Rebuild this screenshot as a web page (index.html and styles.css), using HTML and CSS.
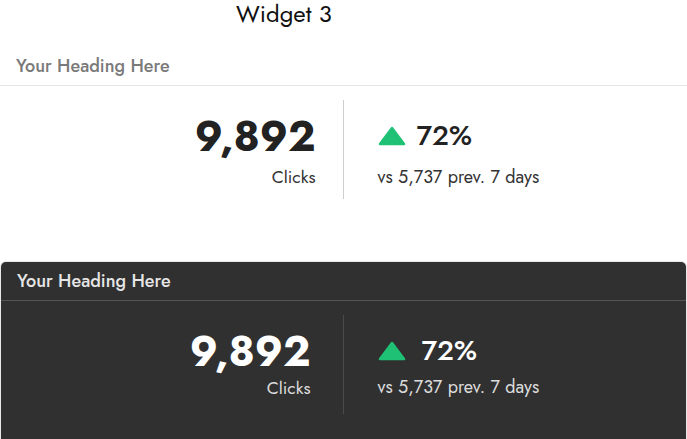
FILE: index.html
```html
<!DOCTYPE html>
<html>
<head>
<meta charset="utf-8">
<link rel="stylesheet" href="styles.css">
</head>
<body>
  <h1 class="page-title">Widget 3</h1>

  <section class="widget widget--light">
    <header class="widget__head">Your Heading Here</header>
    <div class="widget__body">
      <div class="stat">
        <div class="stat__value">9,892</div>
        <div class="stat__label">Clicks</div>
      </div>
      <div class="trend">
        <div class="trend__top">
          <svg class="trend__icon" width="28" height="20" viewBox="0 0 28 20"><polygon points="14,2 26,18 2,18" fill="#1fc174" stroke="#1fc174" stroke-width="2.5" stroke-linejoin="round"/></svg>
          <span class="trend__pct">72%</span>
        </div>
        <div class="trend__sub">vs 5,737 prev. 7 days</div>
      </div>
    </div>
  </section>

  <section class="widget widget--dark">
    <header class="widget__head">Your Heading Here</header>
    <div class="widget__body">
      <div class="stat">
        <div class="stat__value">9,892</div>
        <div class="stat__label">Clicks</div>
      </div>
      <div class="trend">
        <div class="trend__top">
          <svg class="trend__icon" width="28" height="20" viewBox="0 0 28 20"><polygon points="14,2 26,18 2,18" fill="#1fc174" stroke="#1fc174" stroke-width="2.5" stroke-linejoin="round"/></svg>
          <span class="trend__pct">72%</span>
        </div>
        <div class="trend__sub">vs 5,737 prev. 7 days</div>
      </div>
    </div>
  </section>
</body>
</html>
```

FILE: styles.css
```css
* { box-sizing: border-box; }

body {
  margin: 0;
  background: #ffffff;
  font-family: "Jost", "Lato", "Noto Sans", sans-serif;
  color: #222;
}

.page-title {
  margin: 0;
  padding: 0 0 0 236px;
  height: 47px;
  font-size: 24px;
  font-weight: 400;
  line-height: 27px;
  color: #111;
}

.widget__head {
  height: 39px;
  padding: 0 16px;
  display: flex;
  align-items: center;
  font-size: 18px;
  font-weight: 500;
  border-bottom: 1px solid #e6e6e6;
}

.widget__body {
  display: grid;
  grid-template-columns: 1fr 1fr;
  padding: 14px 0;
}

.stat {
  height: 99px;
  border-right: 1px solid #cfcfcf;
  padding: 14px 27px 0 0;
  text-align: right;
}

.stat__value {
  font-size: 42px;
  font-weight: 700;
  line-height: 46px;
  color: #222;
}

.stat__label {
  margin-top: 6px;
  font-size: 17.5px;
  line-height: 22px;
  color: #333;
}

.trend {
  padding: 21px 0 0 34px;
}

.trend__top {
  display: flex;
  align-items: center;
  gap: 11px;
  height: 30px;
}

.trend__icon { display: block; }

.trend__pct {
  font-size: 28px;
  font-weight: 500;
  line-height: 30px;
  color: #222;
}

.trend__sub {
  margin-top: 15px;
  font-size: 18px;
  line-height: 22px;
  color: #333;
}

.widget--light .widget__head { color: #7a7a7a; }

.widget--dark {
  margin: 49px 1px 0 1px;
  background: #303030;
  border-radius: 5px 5px 0 0;
  box-shadow: 0 0 2px rgba(0,0,0,0.35);
}

.widget--dark .widget__head {
  color: #e6e6e6;
  border-bottom-color: #555;
}

.widget--dark .widget__body { padding-bottom: 40px; }

.widget--dark .stat {
  border-right-color: #4a4a4a;
  padding-right: 32px;
}

.widget--dark .stat__label { margin-top: 2px; }
.widget--dark .trend__top { gap: 16px; }
.widget--dark .trend__sub { margin-top: 10px; }

.widget--dark .stat__value { color: #ffffff; }
.widget--dark .stat__label { color: #dcdcdc; }
.widget--dark .trend__pct { color: #ffffff; }
.widget--dark .trend__sub { color: #dcdcdc; }
```
